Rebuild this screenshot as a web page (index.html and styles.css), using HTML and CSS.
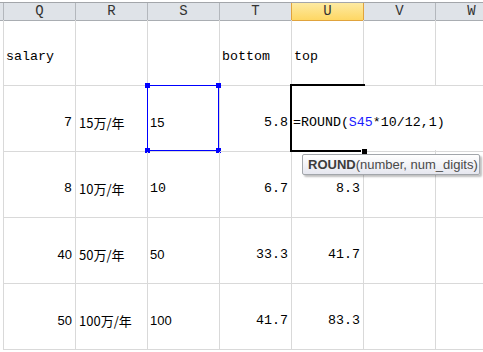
FILE: index.html
```html
<!DOCTYPE html>
<html lang="zh-CN">
<head>
    <meta charset="UTF-8">
    <title>Sheet</title>
    <link rel="stylesheet" href="styles.css">
</head>
<body>

<div class="sheet">
    <div class="row head-row">
        <div class="stub"></div>
        <div class="col-head">Q</div>
        <div class="col-head">R</div>
        <div class="col-head">S</div>
        <div class="col-head">T</div>
        <div class="col-head active">U</div>
        <div class="col-head">V</div>
        <div class="col-head">W</div>
    </div>

    <div class="row">
        <div class="stub"></div>
        <div class="cell">salary</div>
        <div class="cell"></div>
        <div class="cell"></div>
        <div class="cell">bottom</div>
        <div class="cell">top</div>
        <div class="cell"></div>
        <div class="cell"></div>
    </div>

    <div class="row">
        <div class="stub"></div>
        <div class="cell num">7</div>
        <div class="cell cjk">15万/年</div>
        <div class="cell sans">15
            <div class="sel">
                <span class="h tl"></span><span class="h tr"></span>
                <span class="h bl"></span><span class="h br"></span>
            </div>
        </div>
        <div class="cell num">5.8</div>
        <div class="cell editing">
            <div class="edit">=ROUND(<span class="ref">S45</span>*10/12,1)</div>
            <div class="frame"><span class="fill"></span></div>
            <div class="tip"><b>ROUND</b>(number, num_digits)</div>
        </div>
        <div class="cell"></div>
        <div class="cell"></div>
    </div>

    <div class="row">
        <div class="stub"></div>
        <div class="cell num">8</div>
        <div class="cell cjk">10万/年</div>
        <div class="cell">10</div>
        <div class="cell num">6.7</div>
        <div class="cell num">8.3</div>
        <div class="cell"></div>
        <div class="cell"></div>
    </div>

    <div class="row">
        <div class="stub"></div>
        <div class="cell num sans">40</div>
        <div class="cell cjk">50万/年</div>
        <div class="cell sans">50</div>
        <div class="cell num">33.3</div>
        <div class="cell num">41.7</div>
        <div class="cell"></div>
        <div class="cell"></div>
    </div>

    <div class="row">
        <div class="stub"></div>
        <div class="cell num sans">50</div>
        <div class="cell cjk">100万/年</div>
        <div class="cell sans">100</div>
        <div class="cell num">41.7</div>
        <div class="cell num">83.3</div>
        <div class="cell"></div>
        <div class="cell"></div>
    </div>
</div>

</body>
</html>
```

FILE: styles.css
```css
* {
    margin: 0;
    padding: 0;
    box-sizing: border-box;
}

body {
    background-color: #ffffff;
    overflow: hidden;
    font-family: 'Liberation Mono', 'Noto Sans CJK SC', monospace;
    font-size: 13.3px;
    color: #000;
}

.sheet {
    margin-top: 2px;
    width: 483px;
    overflow: hidden;
}

.row {
    display: grid;
    grid-template-columns: 4px repeat(7, 72px);
    height: 66px;
}

.stub {
    border-right: 1px solid #d9d9d9;
}

.head-row {
    height: 18px;
    border-top: 1px solid #a3a6aa;
    background-color: #dfe3e8;
}

.head-row .stub {
    border-right-color: #b3b7bc;
    border-bottom: 1px solid #a9adb2;
}

.col-head {
    border-right: 1px solid #b3b7bc;
    border-bottom: 1px solid #a9adb2;
    text-align: center;
    line-height: 17px;
    font-family: 'Liberation Mono', monospace;
    font-size: 14px;
    color: #333;
}

.col-head.active {
    background: linear-gradient(#fdeaa2, #fed764);
    border-right-color: #e0a33d;
    border-bottom-color: #e0a33d;
    box-shadow: -1px 0 0 #e0a33d;
}

.cell {
    position: relative;
    border-right: 1px solid #d9d9d9;
    border-bottom: 1px solid #d9d9d9;
    display: flex;
    align-items: center;
    padding: 8px 2px 0;
    white-space: nowrap;
}

.num {
    justify-content: flex-end;
    padding-right: 3px;
}

.cjk {
    padding-left: 3px;
    font-family: 'Noto Sans CJK SC', sans-serif;
    font-size: 13px;
}

.sans {
    font-family: 'Liberation Sans', sans-serif;
    font-size: 13px;
}

.sel {
    position: absolute;
    left: -1px;
    top: -1px;
    right: 0;
    bottom: 0;
    border: 1px solid #0000ff;
}

.h {
    position: absolute;
    width: 5px;
    height: 5px;
    background-color: #0000ff;
}

.tl { left: -3px; top: -3px; }
.tr { right: -3px; top: -3px; }
.bl { left: -3px; bottom: -3px; }
.br { right: -3px; bottom: -3px; }

.editing {
    z-index: 2;
}

.edit {
    position: absolute;
    left: 0;
    top: 0;
    width: 160px;
    height: 64px;
    background-color: #fff;
    display: flex;
    align-items: center;
    padding: 8px 0 0 1px;
}

.ref {
    color: #1a1aff;
}

.frame {
    position: absolute;
    left: -2px;
    top: -2px;
    width: 75px;
    height: 68px;
    border-left: 2px solid #000;
    border-top: 2px solid #000;
    border-bottom: 2px solid #000;
}

.fill {
    position: absolute;
    right: -2px;
    bottom: -4px;
    width: 6px;
    height: 5px;
    background-color: #000;
    border-left: 1px solid #fff;
}

.tip {
    position: absolute;
    left: 10px;
    top: 68px;
    width: 178px;
    height: 21px;
    padding-left: 5px;
    border: 1px solid #a2a6ab;
    border-radius: 2px;
    background: linear-gradient(#ffffff, #e6e7ef);
    box-shadow: 2px 2px 2px rgba(0, 0, 0, 0.25);
    font-family: 'Liberation Sans', sans-serif;
    font-size: 13px;
    line-height: 19px;
    color: #4a4a4a;
}

.tip b {
    color: #3c3c3c;
}
```
